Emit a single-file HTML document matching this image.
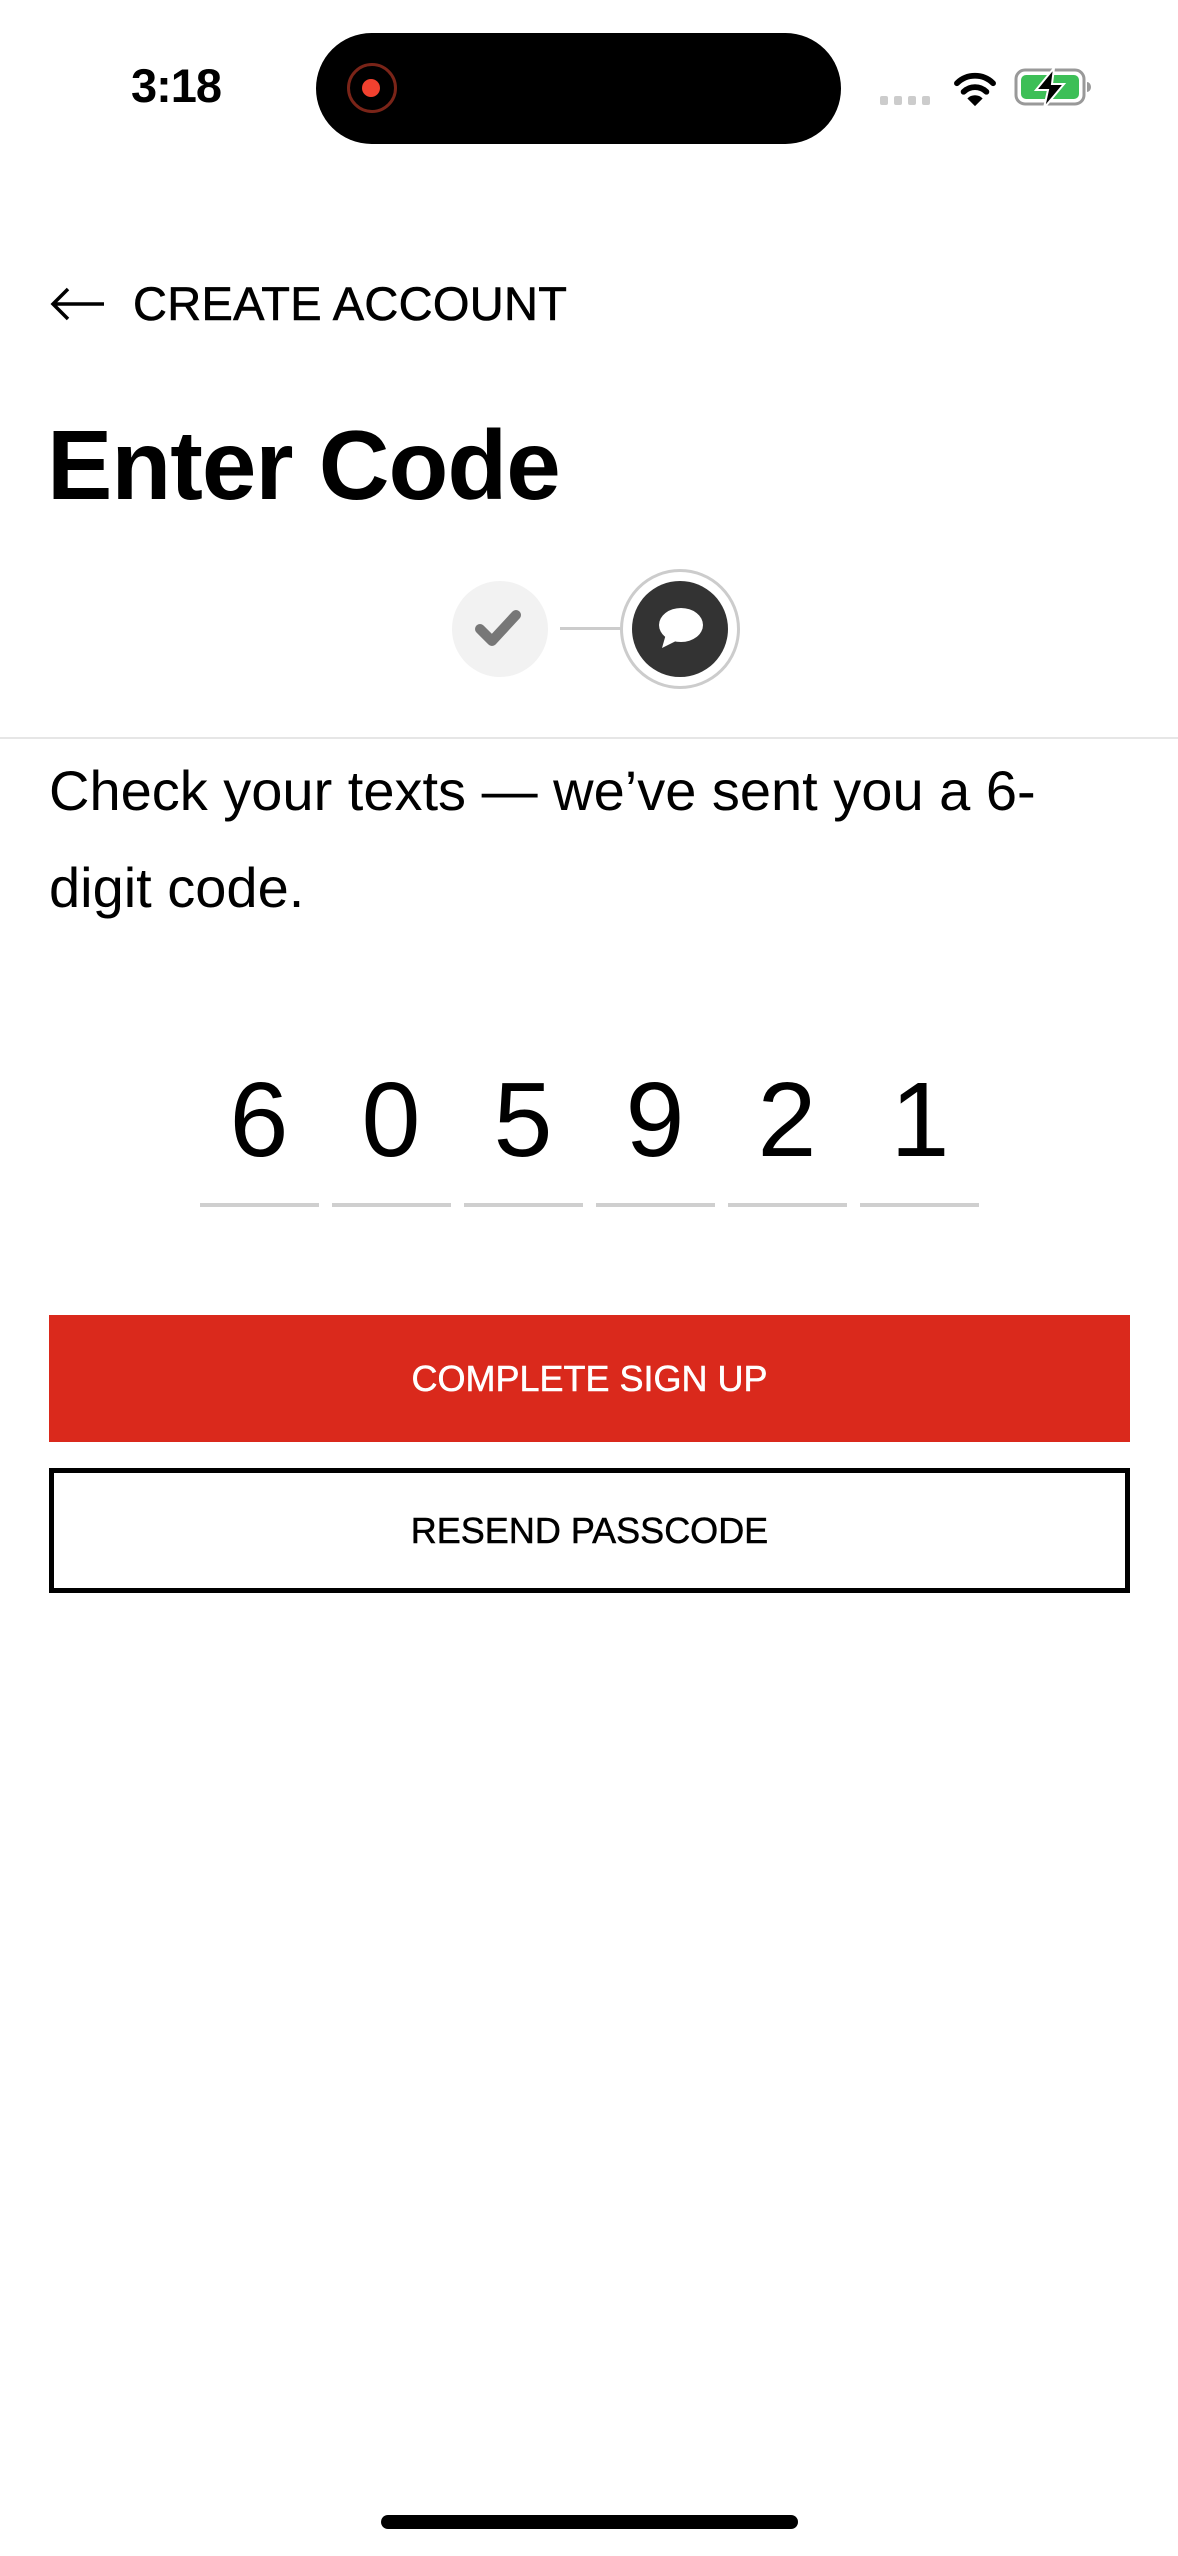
<!DOCTYPE html>
<html><head><meta charset="utf-8"><style>
html,body{margin:0;padding:0;background:#fff;}
body{width:1178px;height:2556px;position:relative;overflow:hidden;font-family:"Liberation Sans",sans-serif;color:#000;}
.a{position:absolute;}
.code{position:absolute;top:1060px;width:132px;text-align:center;font-size:106px;line-height:120px;}
.ul{position:absolute;top:1203px;height:4px;width:119px;background:#cfcfcf;}
</style></head><body>
<div class="a" style="left:126px;top:56px;width:100px;text-align:center;font-size:47px;font-weight:bold;letter-spacing:-1px;line-height:60px;">3:18</div>
<div class="a" style="left:316px;top:33px;width:525px;height:111px;border-radius:56px;background:#000;"></div>
<div class="a" style="left:347px;top:63px;width:44px;height:44px;border:3px solid #7a2418;border-radius:50%;"></div>
<div class="a" style="left:362px;top:79px;width:18px;height:18px;background:#f2412f;border-radius:50%;"></div>
<div class="a" style="left:880px;top:96px;width:8px;height:9px;background:#ccc;border-radius:2px;"></div>
<div class="a" style="left:894px;top:96px;width:8px;height:9px;background:#ccc;border-radius:2px;"></div>
<div class="a" style="left:908px;top:96px;width:8px;height:9px;background:#ccc;border-radius:2px;"></div>
<div class="a" style="left:922px;top:96px;width:8px;height:9px;background:#ccc;border-radius:2px;"></div>
<svg class="a" style="left:952px;top:68px" width="46" height="40" viewBox="0 0 48 42">
<path d="M5 16 A27 27 0 0 1 43 16" stroke="#000" stroke-width="6" fill="none" stroke-linecap="round"/>
<path d="M12 25 A17 17 0 0 1 36 25" stroke="#000" stroke-width="6" fill="none" stroke-linecap="round"/>
<path d="M24 40 L16 32 A11 11 0 0 1 32 32 Z" fill="#000"/>
</svg>
<svg class="a" style="left:1014px;top:68px" width="80" height="40" viewBox="0 0 80 40">
<rect x="2" y="2" width="68" height="34" rx="9" fill="none" stroke="#999" stroke-width="3"/>
<rect x="7" y="7" width="58" height="24" rx="5" fill="#3dbf57"/>
<path d="M73 14 a4 5 0 0 1 0 10 z" fill="#999"/>
<path d="M40 0 L22 22 H34 L30 40 L50 16 H38 Z" fill="#000" stroke="#fff" stroke-width="2"/>
</svg>
<svg class="a" style="left:50px;top:286px" width="56" height="36" viewBox="0 0 56 36">
<path d="M54 18 H4 M18 3 L3 18 L18 33" stroke="#000" stroke-width="3.5" fill="none"/>
</svg>
<div class="a" style="left:133px;top:276px;font-size:47px;line-height:56px;letter-spacing:0.3px;-webkit-text-stroke:0.6px #000;">CREATE ACCOUNT</div>
<div class="a" style="left:47px;top:410px;font-size:98px;font-weight:bold;line-height:110px;letter-spacing:-1px;">Enter Code</div>
<div class="a" style="left:452px;top:581px;width:96px;height:96px;border-radius:50%;background:#f2f2f2;"></div>
<svg class="a" style="left:472px;top:605px" width="56" height="48" viewBox="0 0 56 48">
<path d="M8 24 L20 36 L44 10" stroke="#777" stroke-width="10" fill="none" stroke-linecap="round" stroke-linejoin="round"/>
</svg>
<div class="a" style="left:560px;top:627px;width:60px;height:3px;background:#ccc;"></div>
<div class="a" style="left:620px;top:569px;width:114px;height:114px;border-radius:50%;border:3px solid #ccc;"></div>
<div class="a" style="left:632px;top:581px;width:96px;height:96px;border-radius:50%;background:#333;"></div>
<svg class="a" style="left:652px;top:604px" width="56" height="48" viewBox="0 0 56 48">
<ellipse cx="29" cy="21" rx="22" ry="17" fill="#fff"/>
<path d="M14 30 L10 44 L26 36 Z" fill="#fff"/>
</svg>
<div class="a" style="left:0;top:737px;width:1178px;height:2px;background:#e6e6e6;"></div>
<div class="a" style="left:49px;top:742px;width:1120px;font-size:56px;line-height:97px;">Check your texts — we’ve sent you a 6-<br>digit code.</div>
<div class="code" style="left:193px">6</div>
<div class="code" style="left:325px">0</div>
<div class="code" style="left:457px">5</div>
<div class="code" style="left:589px">9</div>
<div class="code" style="left:721px">2</div>
<div class="code" style="left:854px">1</div>
<div class="ul" style="left:200px"></div>
<div class="ul" style="left:332px"></div>
<div class="ul" style="left:464px"></div>
<div class="ul" style="left:596px"></div>
<div class="ul" style="left:728px"></div>
<div class="ul" style="left:860px"></div>
<div class="a" style="left:49px;top:1315px;width:1081px;height:127px;background:#da291c;color:#fff;font-size:36px;line-height:127px;text-align:center;-webkit-text-stroke:0.5px #fff;">COMPLETE SIGN UP</div>
<div class="a" style="left:49px;top:1468px;width:1071px;height:115px;border:5px solid #000;font-size:36px;line-height:115px;text-align:center;-webkit-text-stroke:0.5px #000;">RESEND PASSCODE</div>
<div class="a" style="left:381px;top:2515px;width:417px;height:14px;border-radius:7px;background:#000;"></div>
</body></html>
